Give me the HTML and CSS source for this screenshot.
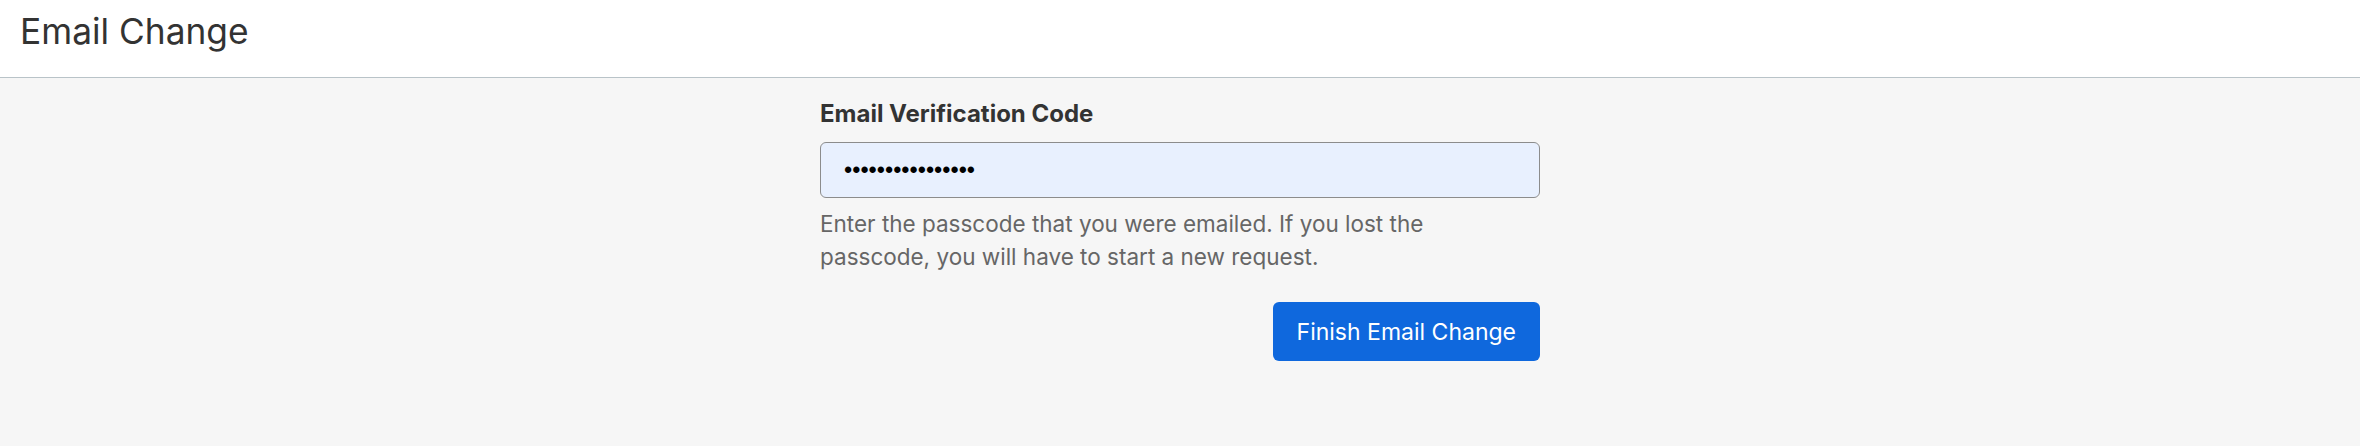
FILE: index.html
```html
<!DOCTYPE html>
<html lang="en">
<head>
<meta charset="utf-8">
<title>Email Change</title>
<link rel="stylesheet" href="styles.css">
</head>
<body>
<header class="page-header">
  <h1 class="page-title">Email Change</h1>
</header>
<main class="page-main">
  <form class="verify-form">
    <label class="field-label" for="code">Email Verification Code</label>
    <input class="field-input" id="code" type="password" value="1234567890123456">
    <p class="field-help">Enter the passcode that you were emailed. If you lost the passcode, you will have to start a new request.</p>
    <div class="form-actions">
      <button class="btn-primary" type="button">Finish Email Change</button>
    </div>
  </form>
</main>
</body>
</html>
```

FILE: styles.css
```css
html, body {
  margin: 0;
  padding: 0;
}
body {
  background: #f6f6f6;
  font-family: Inter, "Noto Sans", sans-serif;
  color: #333;
  height: 446px;
}
.page-header {
  background: #fff;
  box-sizing: border-box;
  height: 78px;
  padding: 10px 20px 0;
  border-bottom: 1px solid #b9c3c8;
}
.page-title {
  margin: 0;
  font-size: 35.3px;
  line-height: 44px;
  font-weight: 400;
  color: #333;
}
.page-main {
  padding-top: 21px;
}
.verify-form {
  width: 720px;
  margin: 0 auto;
  display: flex;
  flex-direction: column;
}
.field-label {
  font-size: 24px;
  line-height: 30px;
  font-weight: 700;
  color: #333;
}
.field-input {
  margin-top: 13px;
  height: 56px;
  box-sizing: border-box;
  border: 1px solid #8c8c8c;
  border-radius: 6px;
  background: #e8f0fe;
  padding: 0 23px;
  font-family: "Liberation Sans", Arial, sans-serif;
  font-size: 23.4px;
  color: #000;
  outline: none;
}
.field-help {
  margin: 9px 0 0;
  font-size: 22.5px;
  line-height: 33px;
  color: #666;
  max-width: 640px;
}
.form-actions {
  display: flex;
  justify-content: flex-end;
  margin-top: 29px;
}
.btn-primary {
  height: 59px;
  padding: 0 24px;
  border: none;
  border-radius: 6px;
  background: #0f68dd;
  color: #fff;
  font-family: Inter, sans-serif;
  font-size: 23px;
  cursor: pointer;
}
```
